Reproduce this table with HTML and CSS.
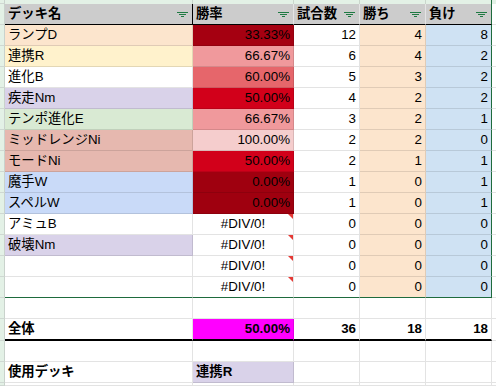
FILE: index.html
```html
<!DOCTYPE html>
<html lang="ja">
<head>
<meta charset="utf-8">
<title>デッキ勝率</title>
<link rel="stylesheet" href="styles.css">
</head>
<body>
<div class="sheet">
  <!-- top strip -->
  <div class="c s top"></div><div class="c top"></div><div class="c top"></div><div class="c top"></div><div class="c top"></div><div class="c top ge"></div><div class="c top f"></div>

  <!-- header -->
  <div class="c s"></div>
  <div class="c h ha"><span>デッキ名</span><svg class="fi" viewBox="0 0 11 8" width="11" height="8"><rect x="0" y="2" width="11" height="1"/><rect x="2" y="4" width="7" height="1"/><rect x="4" y="6" width="3" height="1"/></svg></div>
  <div class="c h"><span>勝率</span><svg class="fi" viewBox="0 0 11 8" width="11" height="8"><rect x="0" y="2" width="11" height="1"/><rect x="2" y="4" width="7" height="1"/><rect x="4" y="6" width="3" height="1"/></svg></div>
  <div class="c h"><span>試合数</span><svg class="fi" viewBox="0 0 11 8" width="11" height="8"><rect x="0" y="2" width="11" height="1"/><rect x="2" y="4" width="7" height="1"/><rect x="4" y="6" width="3" height="1"/></svg></div>
  <div class="c h"><span>勝ち</span><svg class="fi" viewBox="0 0 11 8" width="11" height="8"><rect x="0" y="2" width="11" height="1"/><rect x="2" y="4" width="7" height="1"/><rect x="4" y="6" width="3" height="1"/></svg></div>
  <div class="c h ge"><span>負け</span><svg class="fi" viewBox="0 0 11 8" width="11" height="8"><rect x="0" y="2" width="11" height="1"/><rect x="2" y="4" width="7" height="1"/><rect x="4" y="6" width="3" height="1"/></svg></div>
  <div class="c f hf"></div>

  <!-- rows -->
  <div class="c s"></div><div class="c peach">ランプD</div><div class="c r w33">33.33%</div><div class="c r">12</div><div class="c r peach">4</div><div class="c r blue ge">8</div><div class="c f"></div>
  <div class="c s"></div><div class="c yel">連携R</div><div class="c r w67">66.67%</div><div class="c r">6</div><div class="c r peach">4</div><div class="c r blue ge">2</div><div class="c f"></div>
  <div class="c s"></div><div class="c">進化B</div><div class="c r w60">60.00%</div><div class="c r">5</div><div class="c r peach">3</div><div class="c r blue ge">2</div><div class="c f"></div>
  <div class="c s"></div><div class="c lav">疾走Nm</div><div class="c r w50">50.00%</div><div class="c r">4</div><div class="c r peach">2</div><div class="c r blue ge">2</div><div class="c f"></div>
  <div class="c s"></div><div class="c mint">テンポ進化E</div><div class="c r w67">66.67%</div><div class="c r">3</div><div class="c r peach">2</div><div class="c r blue ge">1</div><div class="c f"></div>
  <div class="c s"></div><div class="c rose">ミッドレンジNi</div><div class="c r w100">100.00%</div><div class="c r">2</div><div class="c r peach">2</div><div class="c r blue ge">0</div><div class="c f"></div>
  <div class="c s"></div><div class="c rose">モードNi</div><div class="c r w50">50.00%</div><div class="c r">2</div><div class="c r peach">1</div><div class="c r blue ge">1</div><div class="c f"></div>
  <div class="c s"></div><div class="c sky">魔手W</div><div class="c r w0">0.00%</div><div class="c r">1</div><div class="c r peach">0</div><div class="c r blue ge">1</div><div class="c f"></div>
  <div class="c s"></div><div class="c sky">スペルW</div><div class="c r w0">0.00%</div><div class="c r">1</div><div class="c r peach">0</div><div class="c r blue ge">1</div><div class="c f"></div>
  <div class="c s"></div><div class="c">アミュB</div><div class="c e">#DIV/0!</div><div class="c r">0</div><div class="c r peach">0</div><div class="c r blue ge">0</div><div class="c f"></div>
  <div class="c s"></div><div class="c lav">破壊Nm</div><div class="c e">#DIV/0!</div><div class="c r">0</div><div class="c r peach">0</div><div class="c r blue ge">0</div><div class="c f"></div>
  <div class="c s"></div><div class="c"></div><div class="c e">#DIV/0!</div><div class="c r">0</div><div class="c r peach">0</div><div class="c r blue ge">0</div><div class="c f"></div>
  <div class="c s"></div><div class="c gb"></div><div class="c e gb">#DIV/0!</div><div class="c r gb">0</div><div class="c r peach gb">0</div><div class="c r blue ge gb">0</div><div class="c f"></div>

  <!-- empty -->
  <div class="c s"></div><div class="c"></div><div class="c"></div><div class="c"></div><div class="c"></div><div class="c"></div><div class="c f"></div>

  <!-- total -->
  <div class="c s"></div><div class="c b tb">全体</div><div class="c r b tb mag">50.00%</div><div class="c r b tb">36</div><div class="c r b tb">18</div><div class="c r b tb">18</div><div class="c f"></div>

  <!-- empty -->
  <div class="c s"></div><div class="c"></div><div class="c"></div><div class="c"></div><div class="c"></div><div class="c"></div><div class="c f"></div>

  <!-- deck in use -->
  <div class="c s"></div><div class="c b">使用デッキ</div><div class="c b lav">連携R</div><div class="c"></div><div class="c"></div><div class="c"></div><div class="c f"></div>

  <!-- rest -->
  <div class="c s"></div><div class="c"></div><div class="c"></div><div class="c"></div><div class="c"></div><div class="c"></div><div class="c f"></div>
</div>
</body>
</html>
```

FILE: styles.css
```css
html, body {
  margin: 0;
  padding: 0;
  background: #ffffff;
}

body {
  width: 496px;
  height: 386px;
  overflow: hidden;
  font-family: "Liberation Sans", "Noto Sans CJK JP", Arial, sans-serif;
  font-size: 13.33px;
  color: #000000;
}

.sheet {
  display: grid;
  grid-template-columns: 5px 188px 101px 66px 66px 66px 1fr;
  grid-template-rows: 4px repeat(15, 21px) 22px 21px 21px 1fr;
  width: 496px;
  height: 386px;
  overflow: hidden;
}

.c {
  box-sizing: border-box;
  position: relative;
  display: flex;
  align-items: flex-end;
  padding: 0 3px 2px 3px;
  line-height: 17px;
  white-space: nowrap;
  overflow: visible;
  border-right: 1px solid rgba(0, 0, 0, 0.11);
  border-bottom: 1px solid rgba(0, 0, 0, 0.11);
  min-width: 0;
}

.top {
  background: #e3f1e6;
  border-bottom: 0;
  padding: 0;
}

.s {
  background: #e3f1e6;
  padding: 0;
  border-right: 1px solid #c9d2cc;
  border-bottom: 1px solid #cfd8d2;
}

.f {
  border-right: 0;
  padding: 0;
}

.top.f {
  background: #e3f1e6;
}

.hf {
  background: #ffffff;
}

/* header */
.h {
  background: #cccccc;
  font-weight: bold;
  justify-content: space-between;
  border-bottom: 1px solid #000000;
  border-right: 1px solid #e4e4e4;
}

.ha {
  border-right: 1px solid #000000;
}

.fi {
  align-self: center;
  margin-right: 1px;
  margin-bottom: -2px;
  fill: #1f7a43;
  flex: none;
}

/* alignment */
.r {
  justify-content: flex-end;
}

.e {
  justify-content: center;
}

.e::after {
  content: "";
  position: absolute;
  top: 0;
  right: 0;
  width: 0;
  height: 0;
  border-top: 5px solid #e53935;
  border-left: 5px solid transparent;
}

.b {
  font-weight: bold;
}

/* table borders */
.ge {
  border-right: 1px solid #1e6b3d;
}

.gb {
  border-bottom: 1px solid #1e6b3d;
}

.tb {
  border-bottom: 2px solid #000000;
}

/* fills */
.peach { background: #fce5cd; }
.yel   { background: #fff2cc; }
.lav   { background: #d9d2e9; }
.mint  { background: #d9ead3; }
.rose  { background: #e6b8af; }
.sky   { background: #c9daf8; }
.blue  { background: #cfe2f3; }
.mag   { background: #ff00ff; }

/* win-rate scale */
.w0   { background: #9f000f; }
.w33  { background: #a50011; }
.w50  { background: #d2001a; }
.w60  { background: #e6666b; }
.w67  { background: #f0999c; }
.w100 { background: #f5cdcd; }
```
